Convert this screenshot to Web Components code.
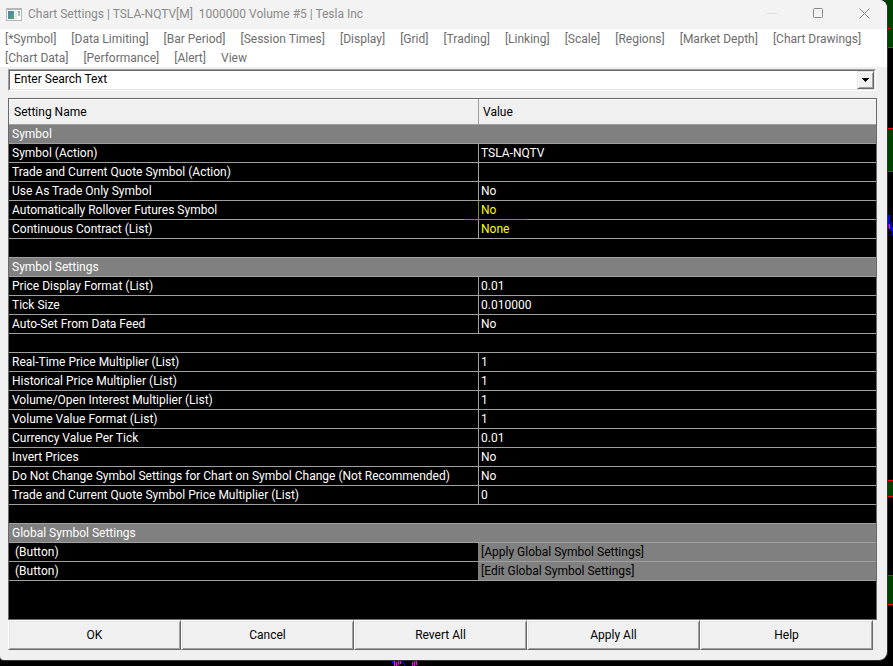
<!DOCTYPE html>
<html lang="en">
<head>
<meta charset="utf-8">
<title>Chart Settings</title>
<style>
html, body { height: 100%; margin: 0; }
body { background: #000; font: 12px/19px Roboto, "Open Sans", sans-serif; color: #000; }
</style>
</head>
<body>
<chart-desktop>
  <settings-window>
    <title-bar slot="title">Chart Settings | TSLA-NQTV[M]  1000000 Volume #5 | Tesla Inc</title-bar>
    <menu-strip slot="menu"></menu-strip>
    <search-combo></search-combo>
    <settings-grid></settings-grid>
    <button-row></button-row>
  </settings-window>
</chart-desktop>
<script>
function define(name, html, setup) {
  const template = document.createElement('template');
  template.innerHTML = html;
  customElements.define(name, class extends HTMLElement {
    constructor() {
      super();
      this.attachShadow({ mode: 'open' }).append(template.content.cloneNode(true));
      if (setup) setup(this.shadowRoot);
    }
  });
}

define('chart-desktop', `
<style>
:host { display: flex; position: relative; box-sizing: border-box; min-height: 100vh; padding: 0 6px 6px 0; background: #000; overflow: hidden; }
svg { position: absolute; }
.side { top: 0; right: 0; }
.bottom { bottom: 0; left: 390px; }
::slotted(*) { flex: 1; position: relative; }
</style>
<svg class="side" width="12" height="666" viewBox="0 0 12 666" shape-rendering="crispEdges" aria-hidden="true">
  <path fill="#004000" d="M0 0H12V47H0ZM6 128H12V171H6ZM6 480H12V496H6ZM6 575H12V604H6Z"/>
  <path fill="#f00" d="M6 28H9V29H6ZM6 47H12V48H6ZM6 128H12V129H6ZM6 171H12V172H6ZM6 480H12V481H6ZM6 496H12V497H6ZM6 575H12V576H6ZM6 604H12V605H6Z"/>
  <path fill="#00f" d="M7 215H9V228H7ZM10 222H11V231H10ZM11 227H12V235H11ZM9 225H10V229H9Z"/>
  <path fill="#f0f" d="M6 219H7V232H6ZM8 224H9V229H8Z"/>
</svg>
<svg class="bottom" width="30" height="6" viewBox="0 0 30 6" shape-rendering="crispEdges" aria-hidden="true">
  <path fill="#00f" d="M2 0H4V3H2ZM13 0H14V4H13ZM14 4H15V6H14Z"/>
  <path fill="#f0f" d="M4 0H5V6H4ZM6 2H7V6H6ZM8 1H9V5H8ZM10 0H11V4H10ZM22 2H23V6H22ZM24 0H25V6H24ZM26 0H28V1H26ZM26 1H27V5H26Z"/>
</svg>
<slot></slot>`);

define('settings-window', `
<style>
:host { display: flex; flex-direction: column; background: #f0f0f0; border-radius: 0 8px 8px 4px; overflow: hidden; box-shadow: 0 0 0 1px #333; }
main { flex: 1; display: flex; flex-direction: column; padding: 2px 10px 10px 8px; }
::slotted(settings-grid) { flex: 1; margin-top: 7px; }
::slotted(button-row) { margin-right: 4px; }
</style>
<slot name="title"></slot><slot name="menu"></slot><main><slot></slot></main>`);

define('title-bar', `
<style>
:host { display: flex; align-items: center; height: 29px; box-sizing: border-box; padding: 0 6px; background: #f3f3f3; color: #8a8a8a; }
.name { flex: 1; margin-left: 6px; white-space: pre; padding-bottom: 1px; }
button { border: 0; background: none; width: 46px; height: 28px; padding: 0 0 2px; display: grid; place-items: center; }
.controls { display: flex; margin-right: -6px; }
</style>
<svg width="16" height="13" viewBox="0 0 16 13" shape-rendering="crispEdges" aria-hidden="true">
  <defs><linearGradient id="g" x2="1" y2="1"><stop offset="0" stop-color="#4a82b4"/><stop offset="1" stop-color="#5aa36a"/></linearGradient></defs>
  <path fill="#b4b7ba" d="M0 0H16V13H0Z"/><path fill="#fafafa" d="M1 2H15V12H1Z"/>
  <path fill="url(#g)" d="M2 3H8V11H2Z"/><path fill="#e4e4e4" d="M9 3H11V11H9Z"/>
  <path fill="#8fb0cf" d="M12 3H14V5H12Z"/><path fill="#a5cbaa" d="M12 5H14V8H12Z"/>
</svg>
<span class="name"><slot></slot></span>
<div class="controls">
<button aria-label="Minimize" disabled><svg width="10" height="11"><path d="M0 5.500H10" stroke="#ddd"/></svg></button>
<button aria-label="Maximize"><svg width="11" height="11"><rect x=".5" y=".5" width="9" height="9" rx="1" fill="none" stroke="#8a8a8a"/></svg></button>
<button aria-label="Close"><svg width="11" height="11"><path d="M.5 .5L10.500 10.500M10.500 .5L.5 10.500" stroke="#8a8a8a"/></svg></button>
</div>`);

define('menu-strip', `
<style>
:host { display: block; background: #fff; }
nav { display: flex; flex-wrap: wrap; gap: 1px 15px; padding: 1px 5px 0; }
button { border: 0; background: none; padding: 0; height: 18px; font: inherit; line-height: 18px; color: #6d6d6d; }
</style><nav></nav>`, root => {
  const nav = root.querySelector('nav');
  for (const label of ['[*Symbol]', '[Data Limiting]', '[Bar Period]', '[Session Times]', '[Display]', '[Grid]', '[Trading]', '[Linking]', '[Scale]', '[Regions]', '[Market Depth]', '[Chart Drawings]', '[Chart Data]', '[Performance]', '[Alert]', 'View']) {
    const b = document.createElement('button');
    b.textContent = label;
    nav.append(b);
  }
});

define('search-combo', `
<style>
:host { display: flex; height: 22px; box-sizing: border-box; margin-right: 1px; border: 1px solid; border-color: #a0a0a0 #fff #fff #a0a0a0; background: #fff; }
.inner { flex: 1; display: flex; border: 1px solid; border-color: #696969 #e3e3e3 #e3e3e3 #696969; }
input { flex: 1; min-width: 0; border: 0; outline: 0; padding: 0 4px 1px; font: inherit; color: #000; background: none; }
button { width: 17px; padding: 0; border: 1px solid; border-color: #e3e3e3 #696969 #696969 #e3e3e3; box-shadow: inset 1px 1px #fff, inset -1px -1px #a0a0a0; background: #f0f0f0; display: grid; place-items: center; }
</style>
<div class="inner"><input aria-label="Search settings" value="Enter Search Text">
<button aria-label="Show search history"><svg width="7" height="4" shape-rendering="crispEdges"><path d="M0 0H7V1H0ZM1 1H6V2H1ZM2 2H5V3H2ZM3 3H4V4H3Z"/></svg></button></div>`);

define('settings-grid', `
<style>
:host { display: block; background: #000; border: 1px solid #696969; color: #fff; }
table { width: 100%; table-layout: fixed; border-collapse: separate; border-spacing: 0; }
.name { width: 54.1%; }
tr { height: 19px; }
th, td { box-sizing: border-box; padding: 0 3px; height: 19px; line-height: 18px; font-weight: 400; text-align: left; white-space: pre; border-bottom: 1px solid #a0a0a0; }
thead th { height: 26px; line-height: 24px; padding: 0 5px; background: #f0f0f0; color: #000; box-shadow: inset 0 1px #fff; }
thead th + th, td { border-left: 1px solid #a0a0a0; padding-left: 4px; }
td { padding-left: 2px; }
.section { background: #808080; }
.action { background: #808080; color: #000; border-left-color: #808080; }
.changed { color: #ff0; }
.marked { position: relative; border-left-color: #909000; }
.marked::after { content: ""; position: absolute; left: -15px; bottom: -1px; width: 63px; height: 1px; background: #909000; z-index: 1; }
</style>
<table><colgroup><col class="name"><col></colgroup>
<thead><tr><th scope="col">Setting Name</th><th scope="col">Value</th></tr></thead><tbody></tbody></table>`, root => {
  const rows = [
    ['Symbol'],
    ['Symbol (Action)', 'TSLA-NQTV'],
    ['Trade and Current Quote Symbol (Action)', ''],
    ['Use As Trade Only Symbol', 'No'],
    ['Automatically Rollover Futures Symbol', 'No', 'changed marked'],
    ['Continuous Contract (List)', 'None', 'changed'],
    [''],
    ['Symbol Settings'],
    ['Price Display Format (List)', '0.01'],
    ['Tick Size', '0.010000'],
    ['Auto-Set From Data Feed', 'No'],
    [''],
    ['Real-Time Price Multiplier (List)', '1'],
    ['Historical Price Multiplier (List)', '1'],
    ['Volume/Open Interest Multiplier (List)', '1'],
    ['Volume Value Format (List)', '1'],
    ['Currency Value Per Tick', '0.01'],
    ['Invert Prices', 'No'],
    ['Do Not Change Symbol Settings for Chart on Symbol Change (Not Recommended)', 'No'],
    ['Trade and Current Quote Symbol Price Multiplier (List)', '0'],
    [''],
    ['Global Symbol Settings'],
    [' (Button)', '[Apply Global Symbol Settings]', 'action'],
    [' (Button)', '[Edit Global Symbol Settings]', 'action']
  ];
  const body = root.querySelector('tbody');
  for (const [name, value, kind] of rows) {
    const tr = body.insertRow();
    const th = document.createElement('th');
    th.textContent = name;
    tr.append(th);
    if (value === undefined) {
      th.colSpan = 2;
      if (name) th.className = 'section';
    } else {
      th.scope = 'row';
      const td = tr.insertCell();
      td.textContent = value;
      if (kind) td.className = kind;
    }
  }
});

define('button-row', `
<style>
:host { display: grid; grid-template-columns: repeat(5, 1fr); height: 30px; }
button { font: inherit; color: #000; background: #f0f0f0; padding: 0; border: 1px solid; border-color: #fff #696969 #696969 #fff; box-shadow: inset 1px 1px #e3e3e3, inset -1px -1px #a0a0a0; }
</style>
<button>OK</button><button>Cancel</button><button>Revert All</button><button>Apply All</button><button>Help</button>`);
</script>
</body>
</html>
